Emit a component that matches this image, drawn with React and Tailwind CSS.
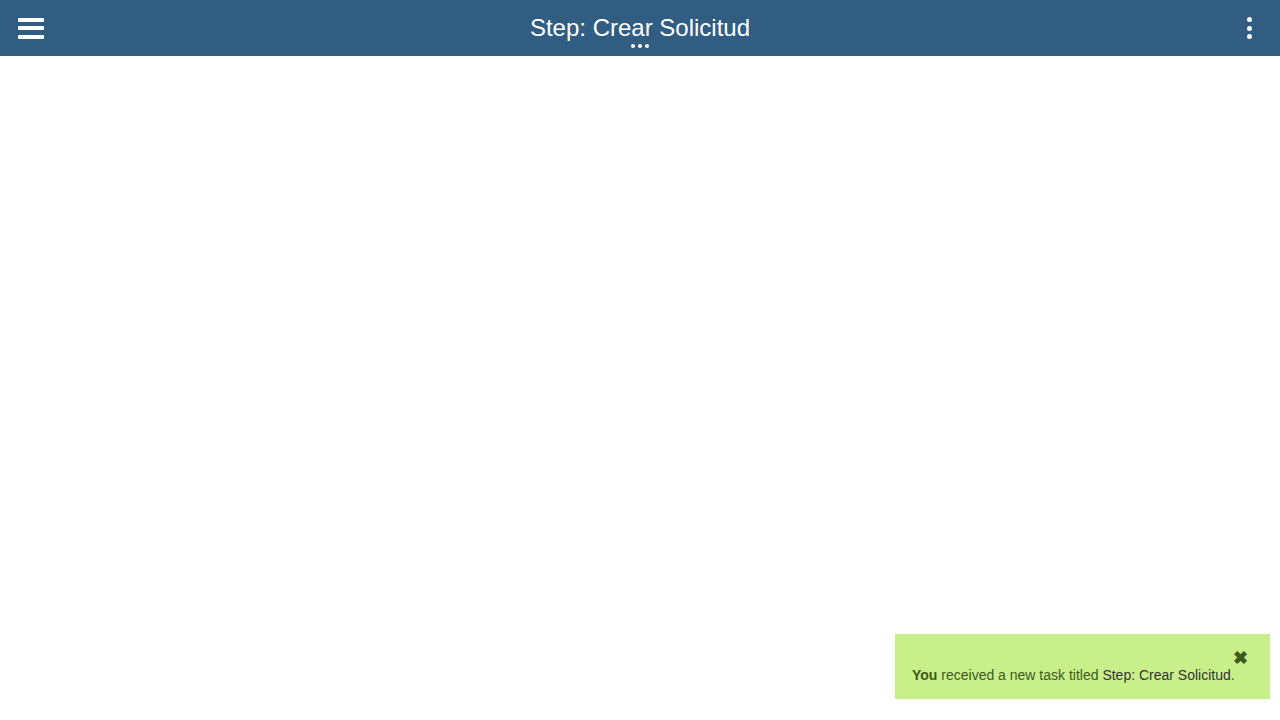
import React from 'react'

export default function App() {
  return (
    <div className="relative w-[1280px] h-[720px] bg-white font-['Liberation_Sans',Arial,sans-serif] overflow-hidden">
      {/* Top bar */}
      <header className="h-14 bg-[#305d81] flex items-center justify-between px-[18px] text-white">
        <button className="flex flex-col gap-[4.5px] w-[26px]">
          <span className="block h-1 w-[26px] bg-white rounded-[1px]" />
          <span className="block h-1 w-[26px] bg-white rounded-[1px]" />
          <span className="block h-1 w-[26px] bg-white rounded-[1px]" />
        </button>
        <div className="flex flex-col items-center pt-[6px]">
          <h1 className="text-[24px] leading-[28px]">Step: Crear Solicitud</h1>
          <div className="flex gap-[3px] mt-[2px]">
            <span className="block w-1 h-1 rounded-full bg-white" />
            <span className="block w-1 h-1 rounded-full bg-white" />
            <span className="block w-1 h-1 rounded-full bg-white" />
          </div>
        </div>
        <button className="flex flex-col items-center gap-[3.5px] w-[26px] pl-[2px]">
          <span className="block w-[5px] h-[5px] rounded-full bg-white" />
          <span className="block w-[5px] h-[5px] rounded-full bg-white" />
          <span className="block w-[5px] h-[5px] rounded-full bg-white" />
        </button>
      </header>

      {/* Notification toast */}
      <div className="absolute left-[895px] top-[634px] w-[375px] h-[65px] bg-[#c9ef8b] px-[17px] pt-[15px]">
        <div className="flex justify-end pr-[5px] h-[18px]">
          <span className="text-[#3d5a1c] text-[18px] leading-[18px] font-bold">✖</span>
        </div>
        <p className="text-[14px] leading-[16px] text-[#3d5a1c]">
          <b>You</b> received a new task titled <span className="text-[#333]">Step: Crear Solicitud</span>.
        </p>
      </div>
    </div>
  )
}
